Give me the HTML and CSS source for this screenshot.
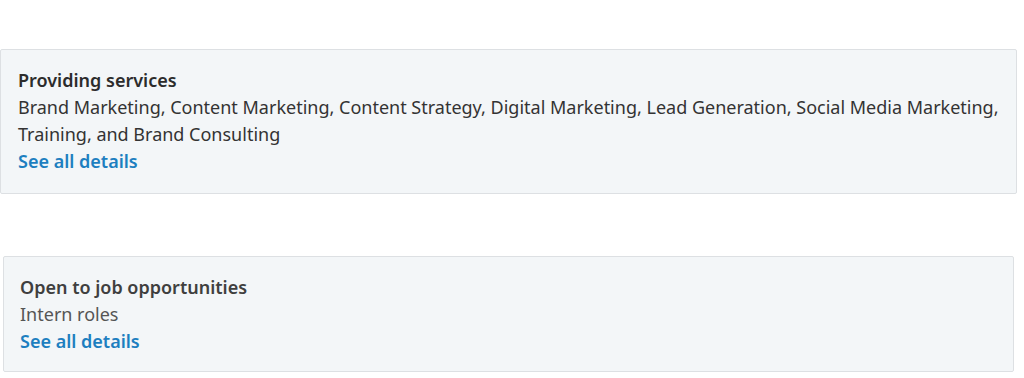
FILE: index.html
```html
<!DOCTYPE html>
<html>
<head>
    <title>Profile highlights</title>
    <link rel="stylesheet" href="styles.css">
</head>
<body>
    <div class="page">
        <div class="card services">
            <div class="card-title">Providing services</div>
            <div class="card-text">Brand Marketing, Content Marketing, Content Strategy, Digital Marketing, Lead Generation, Social Media Marketing, Training, and Brand Consulting</div>
            <a class="card-link" href="#">See all details</a>
        </div>

        <div class="card jobs">
            <div class="card-title">Open to job opportunities</div>
            <div class="card-text">Intern roles</div>
            <a class="card-link" href="#">See all details</a>
        </div>
    </div>
</body>
</html>
```

FILE: styles.css
```css
body {
    margin: 0;
    background-color: #ffffff;
    font-family: "Noto Sans", "Open Sans", sans-serif;
}

.page {
    display: flex;
    flex-direction: column;
    gap: 62px;
    padding-top: 49px;
}

.card {
    display: flex;
    flex-direction: column;
    background-color: #f3f6f8;
    border: 1px solid #dde0e3;
    border-radius: 2px;
    font-size: 18px;
    line-height: 27px;
    padding: 17px 16px 18px 17px;
}

.services {
    margin: 0 7px 0 0;
}

.jobs {
    margin: 0 10px 0 3px;
    padding-left: 16px;
    padding-bottom: 16px;
}

.card-title {
    font-weight: 600;
    color: #2c2c2c;
}

.card-text {
    color: #333333;
}

.jobs .card-title {
    color: #3f3f3f;
}

.jobs .card-text {
    color: #555555;
}

.card-link {
    align-self: flex-start;
    font-weight: 600;
    color: #1d7fc0;
    text-decoration: none;
}
```
